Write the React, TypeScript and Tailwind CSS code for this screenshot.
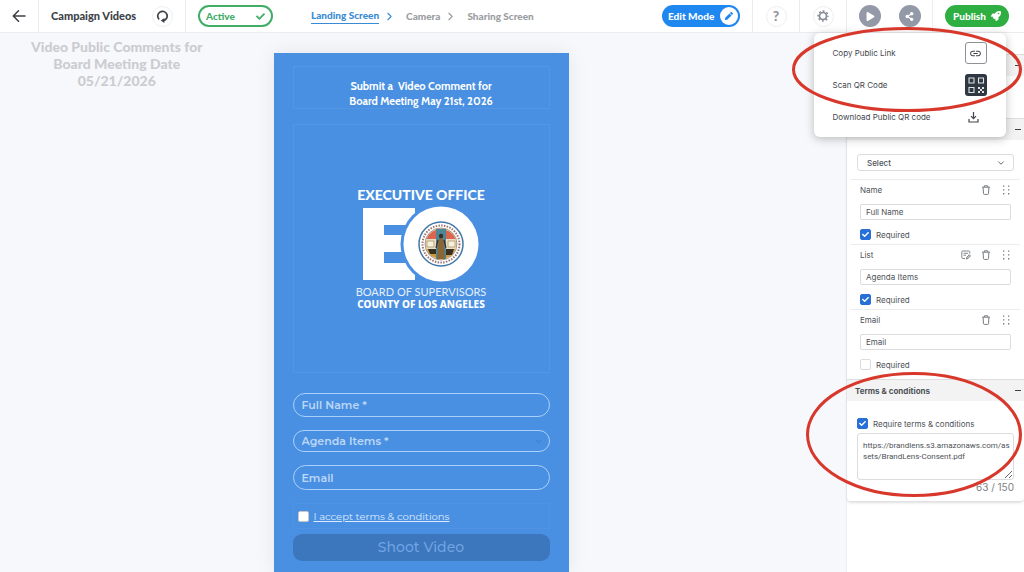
import { useState } from "react";
import type { ReactNode } from "react";
import { ChevronDown, ChevronRight } from "lucide-react";
import { FaCheck, FaPen, FaPlay, FaRocket, FaShareAlt } from "react-icons/fa";
import { MdLink } from "react-icons/md";

function HeaderCell({ children, className }: { children: ReactNode; className: string }) {
  return <div className={`flex h-full items-center border-[#ececf0] ${className}`}>{children}</div>;
}

function Header() {
  return (
    <header className="relative z-20 flex h-[33px] shrink-0 items-center border-b border-[#ececf0] bg-white font-[Lato,sans-serif] font-black text-[#3d4248]">
      <HeaderCell className="w-[39px] justify-center border-r">
        <button aria-label="Back">
          <svg width="14" height="14" viewBox="0 0 14 14" fill="none" stroke="currentColor" strokeWidth="1.6" strokeLinecap="round" strokeLinejoin="round">
            <path d="M13 7H1.5M6.500 1.800 1.300 7l5.200 5.200" />
          </svg>
        </button>
      </HeaderCell>
      <HeaderCell className="w-[147px] justify-between border-r pl-3 pr-3">
        <span className="whitespace-nowrap text-[11px]">Campaign Videos</span>
        <button aria-label="Refresh" className="grid size-[21px] place-items-center rounded-full border border-[#eeeeee]">
          <svg width="13" height="13" viewBox="0 0 13 13" fill="none" stroke="currentColor" strokeWidth="1.7">
            <path d="M3.100 9.300A4.700 4.700 0 1 1 7.500 10.600" />
            <path d="M8.400 8v5L4.700 10.600Z" fill="currentColor" stroke="none" />
          </svg>
        </button>
      </HeaderCell>
      <button className="ml-3 flex h-[22px] w-[75px] items-center justify-between rounded-full border-2 border-[#41ad67] px-1.5 text-[10px] text-[#41ad67]">
        Active
        <FaCheck size={9} />
      </button>
      <nav className="ml-[38px] flex items-center whitespace-nowrap text-[10px] text-[#9a9da2]">
        <a href="#landing" className="border-b border-[#3b8bd4] leading-[15px] text-[#3b8bd4]">Landing Screen</a>
        <ChevronRight size={13} strokeWidth={2} className="mx-1 text-[#3b8bd4]" />
        <a href="#camera" className="ml-1.5">Camera</a>
        <ChevronRight size={13} strokeWidth={2} className="mx-1" />
        <a href="#sharing" className="ml-1.5">Sharing Screen</a>
      </nav>
      <button className="ml-auto mr-3 flex h-[22px] w-[78px] items-center justify-between rounded-full bg-[#1f87f0] pl-1.5 pr-0.5 text-[10px] whitespace-nowrap text-white">
        Edit Mode
        <span className="grid size-[18px] place-items-center rounded-full bg-white text-[#1f87f0]">
          <FaPen size={8} />
        </span>
      </button>
      <HeaderCell className="w-[47px] justify-center border-l">
        <button aria-label="Help" className="grid size-[21px] place-items-center rounded-full border border-[#eeeeee] text-[14px] leading-none text-[#9398a0]">?</button>
      </HeaderCell>
      <HeaderCell className="w-[47px] justify-center border-l">
        <button aria-label="Settings" className="grid size-[21px] place-items-center rounded-full border border-[#eeeeee] text-[#858b94]">
          <svg width="12" height="12" viewBox="0 0 12 12" fill="none" stroke="currentColor">
            <circle cx="6" cy="6" r="3.500" strokeWidth="1.700" />
            <circle cx="6" cy="6" r="4.900" strokeWidth="1.500" strokeDasharray="1.900 1.948" strokeDashoffset=".95" />
          </svg>
        </button>
      </HeaderCell>
      <HeaderCell className="w-[86px] justify-center gap-[18px] border-l">
        <button aria-label="Play" className="grid size-[22px] place-items-center rounded-full bg-[#9399a6] pl-0.5 text-white">
          <FaPlay size={9} />
        </button>
        <div className="relative">
          <button aria-label="Share" className="grid size-[22px] place-items-center rounded-full bg-[#9399a6] text-white">
            <FaShareAlt size={9} />
          </button>
          <ShareMenu />
        </div>
      </HeaderCell>
      <HeaderCell className="w-[92px] border-l pl-3">
        <button className="flex h-[22px] w-16 items-center justify-between rounded-full bg-[#2fae42] px-2 text-[10px] text-white">
          Publish
          <FaRocket size={10} />
        </button>
      </HeaderCell>
    </header>
  );
}

function ShareMenu() {
  const row = "flex h-8 w-full items-center justify-between text-left";
  return (
    <div className="absolute top-7 -right-[85px] w-[192px] rounded-md bg-white py-1 pr-[19px] pl-[19px] font-[Inter,sans-serif] text-[8px] font-normal text-[#43474d] shadow-[0_2px_10px_rgba(0,0,0,0.25)]">
      <button className={row}>
        Copy Public Link
        <span className="grid size-[22px] place-items-center rounded-[3px] border border-[#8d9196]">
          <MdLink size={13} />
        </span>
      </button>
      <button className={row}>
        Scan QR Code
        <span className="grid size-[22px] place-items-center rounded-[3px] bg-[#2f3740] text-[#dfe3e6]">
          <svg width="18" height="18" viewBox="0 0 18 18" fill="none" stroke="currentColor" strokeWidth="1.1">
            <path d="M2 2h5v5H2zM11.500 2h5v5h-5zM2 11.500h5v5H2z" />
            <path d="M11 11h2v2h-2zM15 11h2v2h-2zM13 13h2v2h-2zM11 15h2v2h-2zM15 15h2v2h-2z" fill="currentColor" stroke="none" />
          </svg>
        </span>
      </button>
      <button className={row}>
        Download Public QR code
        <span className="grid w-[26px] place-items-center">
          <svg width="11" height="12" viewBox="0 0 11 12" fill="none" stroke="currentColor" strokeWidth="1.2">
            <path d="M5.500 1v6.500M3 5.200l2.500 2.500L8 5.200M1 8v3h9V8" />
          </svg>
        </span>
      </button>
    </div>
  );
}

function Logo() {
  return (
    <div className="flex flex-col items-center whitespace-nowrap text-white">
      <div className="font-[Lato,sans-serif] text-[14px] leading-4 font-black">EXECUTIVE OFFICE</div>
      <svg width="126" height="80" viewBox="0 0 126 80">
        <path d="M5 5h52v17H26v10h20v17H26v11h31v17H5z" fill="#fff" />
        <circle cx="83" cy="41" r="40.500" fill="#4a90e2" />
        <circle cx="83" cy="41" r="37.500" fill="#fff" />
        <circle cx="83" cy="41" r="22" fill="#fff" stroke="#4377a8" strokeWidth="1.500" />
        <circle cx="83" cy="41" r="18.500" fill="none" stroke="#9a7673" strokeWidth="2" strokeDasharray="1.500 1.300" />
        <circle cx="83" cy="41" r="16" fill="#e9dfc9" stroke="#7c5a3a" strokeWidth=".6" />
        <path d="M68.500 36a15.500 15.500 0 0 1 29 0z" fill="#dc6550" />
        <path d="M68.500 46a15.500 15.500 0 0 0 29 0z" fill="#c99a3c" />
        <path d="M70 46h8v5h-6zM88 46h8l-2 6h-6z" fill="#3b3020" />
        <path d="M69 38h7v6h-7zM90 38h7v6h-7z" fill="#f7f0dc" stroke="#a58d58" strokeWidth=".7" />
        <path d="M78 26h10v30H78z" fill="#4b8798" />
        <path d="M79 56l1.500-18 2.500-8 2.500 8L87 56z" fill="#8b6632" />
        <circle cx="83" cy="33" r="2.200" fill="#3d2b24" />
        <path d="M80 37l-2 8M86 37l2 8" stroke="#3d2b24" strokeWidth="1.200" />
      </svg>
      <div className="mt-0.5 font-[Lato,sans-serif] text-[11px] leading-[13px] text-[#e3effc]">BOARD OF SUPERVISORS</div>
      <div className="font-['Noto_Sans',sans-serif] text-[10px] leading-3 font-extrabold">COUNTY OF LOS ANGELES</div>
    </div>
  );
}

function Phone() {
  const field = "w-full rounded-full border border-[#a9d0fa] bg-transparent px-2 text-[11px] font-semibold text-[#bcd7f7] placeholder:text-[#bcd7f7]";
  return (
    <section className="flex min-h-full w-[295px] flex-col bg-[#4a90e2] px-[19px] pt-[13px] shadow-[0_0_20px_rgba(0,0,0,0.08)]">
      <h2 className="flex h-[43px] flex-col justify-center border border-[#5495e4] pt-3 text-center font-[Cabin,Lato,sans-serif] text-[11px] leading-[15px] font-bold whitespace-pre text-white">
        {"Submit a  Video Comment for\nBoard Meeting May 21st, 2026"}
      </h2>
      <div className="mt-[15px] flex h-[249px] items-center justify-center border border-[#5495e4]">
        <Logo />
      </div>
      <form className="flex flex-col pt-5 font-[Montserrat,Inter,sans-serif]">
        <input aria-label="Full Name" placeholder="Full Name *" className={`${field} h-6`} />
        <div className="relative mt-[13px] flex">
          <select aria-label="Agenda Items" className={`${field} h-[22px] appearance-none`}>
            <option>Agenda Items *</option>
          </select>
          <ChevronDown size={9} className="pointer-events-none absolute top-[7px] right-[7px] text-[#3573bd]" />
        </div>
        <input aria-label="Email" placeholder="Email" className={`${field} mt-[13px] h-[25px]`} />
        <label className="mt-[13px] flex h-[26px] items-center gap-[5px] border border-[#5093e3] px-1 text-[10px] text-[#dceafa] underline">
          <input type="checkbox" className="size-[11px] appearance-none rounded-[2px] border border-[#c8c8c8] bg-white" />
          I accept terms &amp; conditions
        </label>
        <button type="button" className="mt-[5px] h-[27px] rounded-[9px] bg-[#3c76bd] text-[14px] font-medium text-[#6fa4e3]">Shoot Video</button>
      </form>
    </section>
  );
}

function Tick({ label, defaultChecked }: { label: string; defaultChecked: boolean }) {
  const [checked, setChecked] = useState(defaultChecked);
  return (
    <label className="flex h-[11px] items-center gap-[5px]">
      <span className="grid size-[11px] place-items-center">
        <input
          type="checkbox"
          checked={checked}
          onChange={(e) => setChecked(e.target.checked)}
          className="col-start-1 row-start-1 size-[11px] appearance-none rounded-[2px] border border-[#dcdcdc] bg-white checked:border-[#2670d8] checked:bg-[#2670d8]"
        />
        {checked && <FaCheck size={7} className="pointer-events-none col-start-1 row-start-1 text-white" />}
      </span>
      {label}
    </label>
  );
}

function SectionBar({ title }: { title?: string }) {
  return (
    <div className="flex h-[22px] items-center justify-between border-t border-[#dedede] bg-[#f3f3f4] pr-[3px] pl-2">
      <h3 className="font-bold">{title}</h3>
      <button aria-label="Collapse section" className="flex h-3 items-center">
        <span className="h-px w-1.5 bg-[#3d4248]" />
      </button>
    </div>
  );
}

function TrashIcon() {
  return (
    <svg width="10" height="10" viewBox="0 0 10 10" fill="none" stroke="currentColor">
      <path d="M1 2.200h8M3.300 2V.8h3.400V2M2.100 2.400l.4 6.200q.1.800.8.800h3.400q.7 0 .8-.8l.4-6.200" />
    </svg>
  );
}

function EditIcon() {
  return (
    <svg width="10" height="10" viewBox="0 0 10 10" fill="none" stroke="currentColor" strokeWidth=".9">
      <path d="M4 8.500H1.800q-1 0-1-1V2q0-1 1-1h6q1 0 1 1v1.500M2.500 3.300h4.500M2.500 5.200h2.500" />
      <path d="M5.300 9l.3-1.600 2.700-2.700 1.200 1.200L6.800 8.700Z" fill="currentColor" fillOpacity=".4" />
    </svg>
  );
}

function DragDots() {
  return (
    <svg width="8" height="10" viewBox="0 0 8 10" fill="currentColor">
      <path d="M1 .5h1.300v1.300H1zM6 .5h1.300v1.300H6zM1 4.300h1.300v1.300H1zM6 4.300h1.300v1.300H6zM1 8.100h1.300v1.300H1zM6 8.100h1.300v1.300H6z" />
    </svg>
  );
}

function FieldEditor({ name, value, required, editable }: { name: string; value: string; required: boolean; editable?: boolean }) {
  return (
    <div className="mx-1 border-t border-[#ececee] px-[9px] pb-1">
      <div className="flex h-5 items-center pr-px text-[#777b80]">
        <span className="mr-auto text-[#4e5257]">{name}</span>
        {editable && (
          <button aria-label={`Edit ${name}`} className="mr-2.5">
            <EditIcon />
          </button>
        )}
        <button aria-label={`Delete ${name}`} className="mr-[11px]">
          <TrashIcon />
        </button>
        <button aria-label={`Move ${name}`}>
          <DragDots />
        </button>
      </div>
      <input aria-label={name} defaultValue={value} className="mt-1 block h-4 w-full rounded-[2px] border border-[#dcdcdf] px-[5px]" />
      <div className="mt-[9px]">
        <Tick label="Required" defaultChecked={required} />
      </div>
    </div>
  );
}

function Sidebar() {
  return (
    <aside className="w-[178px] shrink-0 border-l border-[#eeeef1] bg-white font-[Inter,sans-serif] text-[8px] text-[#4e5257]">
      <div className="rounded-b border-b border-[#e2e2e4] pb-1.5 shadow-sm">
        <div className="h-[21px]" />
        <SectionBar />
        <div className="h-[42px]" />
        <SectionBar />
        <div className="relative mx-2.5 mt-3.5 mb-2">
          <select aria-label="Field type" className="h-[17px] w-full appearance-none rounded-[3px] border border-[#dcdcdf] bg-white px-[9px] font-medium">
            <option>Select</option>
          </select>
          <ChevronDown size={10} className="pointer-events-none absolute top-1 right-2" />
        </div>
        <FieldEditor name="Name" value="Full Name" required />
        <FieldEditor name="List" value="Agenda Items" required editable />
        <FieldEditor name="Email" value="Email" required={false} />
        <div className="h-[5px]" />
        <SectionBar title="Terms & conditions" />
        <div className="px-2.5 pt-[17px]">
          <Tick label="Require terms & conditions" defaultChecked />
          <textarea
            aria-label="Terms link"
            defaultValue="https://brandlens.s3.amazonaws.com/assets/BrandLens-Consent.pdf"
            className="mt-1 block h-[47px] w-full rounded-[3px] border border-[#dcdcdf] py-1.5 pr-0.5 pl-[5px] font-[Roboto,sans-serif] leading-[11px] break-all"
          />
          <div className="text-right text-[10px] leading-[15px] text-[#7b7e83]">63 / 150</div>
        </div>
      </div>
    </aside>
  );
}

function Annotations() {
  return (
    <svg className="pointer-events-none absolute top-0 right-0 z-30" width="240" height="510" viewBox="784 0 240 510" fill="none" stroke="#d8382b" strokeWidth="3">
      <ellipse cx="907" cy="69.500" rx="113.500" ry="41" />
      <ellipse cx="914" cy="434.500" rx="106.500" ry="61" />
    </svg>
  );
}

export default function App() {
  return (
    <div className="relative flex h-screen flex-col overflow-hidden bg-white">
      <Header />
      <div className="flex min-h-0 flex-1">
        <main className="grid flex-1 grid-cols-[1fr_295px_1fr] bg-[#f7f8fb] pr-1">
          <h1 className="px-6 pt-[5px] pr-16 text-center font-[Lato,sans-serif] text-[14px] leading-[17px] font-black text-[#cbccd0]">
            Video Public Comments for Board Meeting Date 05/21/2026
          </h1>
          <div className="pt-5">
            <Phone />
          </div>
        </main>
        <Sidebar />
      </div>
      <Annotations />
    </div>
  );
}
